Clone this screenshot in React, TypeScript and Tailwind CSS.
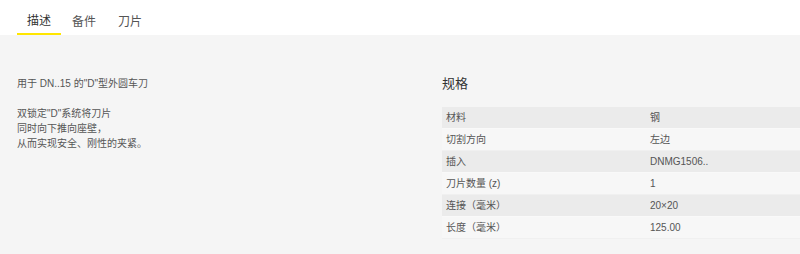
import React from "react";

const rows: [string, string][] = [
  ["材料", "钢"],
  ["切割方向", "左边"],
  ["插入", "DNMG1506.."],
  ["刀片数量 (z)", "1"],
  ["连接（毫米）", "20×20"],
  ["长度（毫米）", "125.00"],
];

export default function App() {
  const font = { fontFamily: '"Liberation Sans", "Noto Sans CJK SC", sans-serif' };
  return (
    <div className="w-[800px] h-[254px] overflow-hidden bg-[#f5f5f5] text-[#555]" style={font}>
      <div className="h-[35px] bg-white flex items-end pl-[17px]">
        <div className="flex text-[12px]">
          <div className="px-[10px] h-[26px] flex items-center border-b-2 border-[#ffe600] text-[#333]">描述</div>
          <div className="px-[10px] h-[26px] flex items-center ml-[1px] text-[#555]">备件</div>
          <div className="px-[10px] h-[26px] flex items-center ml-[2px] text-[#555]">刀片</div>
        </div>
      </div>
      <div className="flex pl-[17px] pt-[39px]">
        <div className="w-[425px] shrink-0 text-[10px] leading-[15px]">
          <p className="mt-[2px]">用于 DN..15 的"D"型外圆车刀</p>
          <p className="mt-[15px]">双锁定"D"系统将刀片</p>
          <p>同时向下推向座壁，</p>
          <p>从而实现安全、刚性的夹紧。</p>
        </div>
        <div className="w-[416px] shrink-0">
          <h3 className="text-[13px] leading-[20px] text-[#333]">规格</h3>
          <div className="mt-[13px] text-[10px]">
            {rows.map(([k, v], i) => (
              <div
                key={k}
                className={
                  i % 2 === 0
                    ? "flex h-[22px] items-center bg-[#ebebeb] border-b border-[#f9f9f9]"
                    : "flex h-[22px] items-center bg-[#f7f7f7] border-b border-[#f0f0f0]"
                }
              >
                <div className="w-[208px] pl-[4px]">{k}</div>
                <div>{v}</div>
              </div>
            ))}
          </div>
        </div>
      </div>
    </div>
  );
}
